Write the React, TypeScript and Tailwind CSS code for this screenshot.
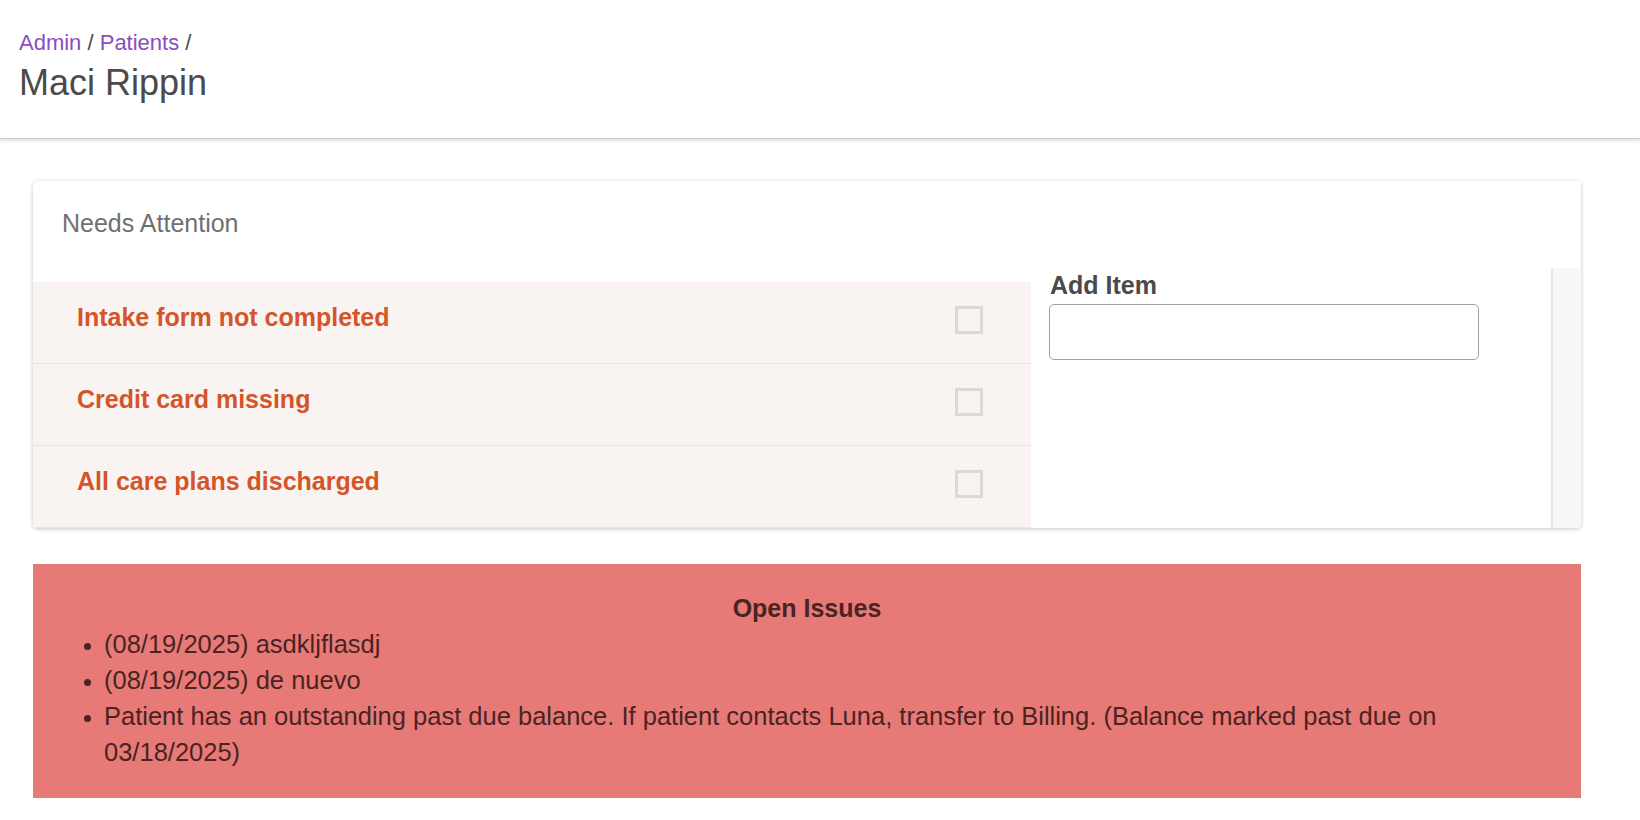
import React from 'react';

const ITEMS = ['Intake form not completed', 'Credit card missing', 'All care plans discharged'];

const ISSUES = [
  '(08/19/2025) asdkljflasdj',
  '(08/19/2025) de nuevo',
  'Patient has an outstanding past due balance. If patient contacts Luna, transfer to Billing. (Balance marked past due on 03/18/2025)',
];

const App: React.FC = () => {
  return (
    <div className="min-h-screen bg-white font-['Liberation_Sans',Arial,sans-serif]">
      {/* page header */}
      <div className="h-[139px] box-border border-b border-[#cdcdcd] shadow-[0_2px_3px_rgba(0,0,0,0.12)] px-[19px] pt-[30px]">
        <div className="text-[22px] leading-[25px] text-[#4a4a4a]">
          <a className="text-[#8b4dc0]">Admin</a> / <a className="text-[#8b4dc0]">Patients</a> /
        </div>
        <h1 className="mt-[7px] text-[36px] leading-[41px] text-[#4a4a4a]">Maci Rippin</h1>
      </div>

      <div className="ml-[33px] w-[1548px] pt-[42px]">
        {/* needs attention card */}
        <div className="bg-white rounded-[4px] shadow-[0_1px_4px_rgba(0,0,0,0.22)] overflow-hidden">
          <div className="h-[87px] pl-[29px] pt-[28px] text-[25px] leading-[29px] text-[#707070]">Needs Attention</div>
          <div className="flex">
            <div className="w-[998px] mt-[14px] bg-[#f9f4f1]">
              {ITEMS.map((item) => (
                <div key={item} className="h-[82px] box-border border-b border-[#ebe3df] flex items-center justify-between pl-[44px] pr-[48px]">
                  <span className="mb-[10px] text-[25px] leading-[29px] font-bold text-[#d4552a]">{item}</span>
                  <span className="mb-[5px] w-[28px] h-[28px] box-border border-[3px] border-[#d9d9d9]" />
                </div>
              ))}
            </div>
            <div className="flex-1 flex">
              <div className="flex-1 pl-[18px] pt-[3px]">
                <label className="block ml-[1px] text-[25px] leading-[29px] font-bold text-[#4a4a4a]">Add Item</label>
                <input
                  type="text"
                  className="mt-[4px] w-[430px] h-[56px] box-border border border-[#a3a3a3] rounded-[5px] bg-white px-3 text-[22px] outline-none"
                />
              </div>
              <div className="w-[30px] border-l-2 border-[#e6e6e6] bg-[#f8f8f8]" />
            </div>
          </div>
        </div>

        {/* open issues */}
        <div className="mt-[36px] bg-[#e77a76] text-[#4a2323] px-[20px] pt-[26px] pb-[28px] text-[25.5px] leading-[36px]">
          <div className="text-center font-bold text-[25px]">Open Issues</div>
          <ul className="list-disc pl-[51px] marker:text-[22px]">
            {ISSUES.map((issue) => (
              <li key={issue}>{issue}</li>
            ))}
          </ul>
        </div>
      </div>
    </div>
  );
};

export default App;
